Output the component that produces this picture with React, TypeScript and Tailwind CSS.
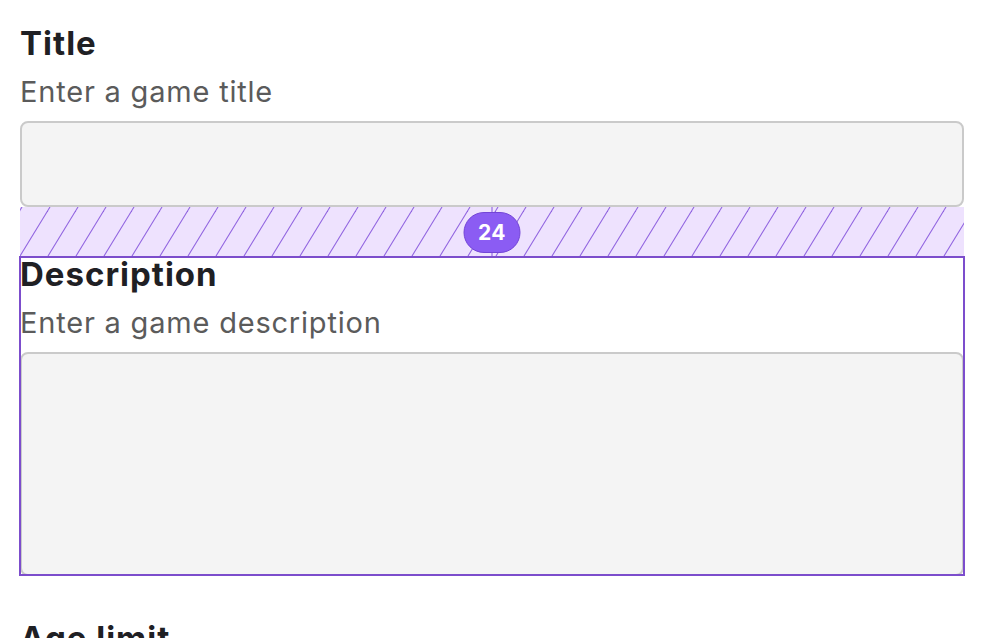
import React from 'react';

function FieldHead({ label, hint }: { label: string; hint: string }) {
  return (
    <>
      <h2 className="text-[33px] font-bold leading-[36px] tracking-[1px] text-[#1f2024]">{label}</h2>
      <p className="mt-[13px] text-[29px] leading-[36px] tracking-[0.8px] text-[#5b5b5b]">{hint}</p>
    </>
  );
}

// spacing indicator drawn by the inspector between two fields
function Gap({ value }: { value: number }) {
  return (
    <div className="relative h-[49px] bg-[#eee2fe]">
      <svg className="absolute inset-0 h-full w-full">
        <defs>
          <pattern id="hatch" width="28" height="49" patternUnits="userSpaceOnUse">
            <line x1="-28" y1="49" x2="2" y2="0" stroke="#9063e0" strokeWidth="1.1" />
            <line x1="0" y1="49" x2="30" y2="0" stroke="#9063e0" strokeWidth="1.1" />
            <line x1="28" y1="49" x2="58" y2="0" stroke="#9063e0" strokeWidth="1.1" />
          </pattern>
        </defs>
        <rect width="100%" height="100%" fill="url(#hatch)" />
      </svg>
      <div className="absolute left-1/2 top-0 bottom-0 w-px -translate-x-1/2 bg-[#8656dc]" />
      <div className="absolute left-1/2 top-[5px] flex h-[41px] w-[57px] -translate-x-1/2 items-center justify-center rounded-full border border-[#7345d6] bg-[#8b5cf3]">
        <span className="text-[21px] font-bold leading-none tracking-[0.5px] text-white">{value}</span>
      </div>
    </div>
  );
}

export default function App() {
  return (
    <div className="min-h-screen bg-white px-5 pt-[25px] font-['Inter',sans-serif]">
      {/* Title */}
      <div>
        <FieldHead label="Title" hint="Enter a game title" />
        <input
          type="text"
          className="mt-[11px] block h-[86px] w-full rounded-lg border-2 border-[#cacaca] bg-[#f4f4f4] outline-none"
        />
      </div>

      <Gap value={24} />

      {/* Description (selected) */}
      <div className="relative">
        <FieldHead label="Description" hint="Enter a game description" />
        <textarea className="mt-[11px] block h-[224px] w-full resize-none rounded-lg border-2 border-[#cacaca] bg-[#f4f4f4] outline-none" />
        <div className="pointer-events-none absolute -left-px -right-px top-0 bottom-0 border-2 border-[#7c4dcc]" />
      </div>

      {/* Age limit */}
      <div className="mt-[44px]">
        <h2 className="text-[33px] font-bold leading-[36px] tracking-[1px] text-[#1f2024]">Age limit</h2>
      </div>
    </div>
  );
}
